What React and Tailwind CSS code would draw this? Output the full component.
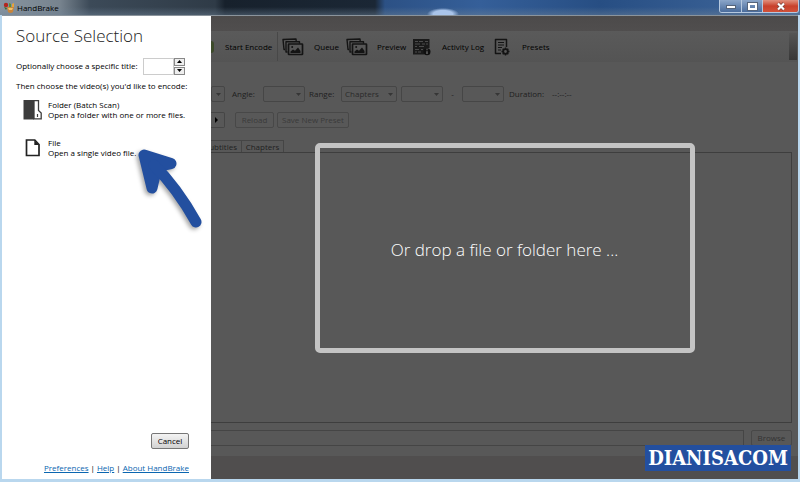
import { useState } from "react";

const toolbar = [
  { label: "Queue", Icon: PicturesIcon, gap: "gap-[10px] w-[64px]" },
  { label: "Preview", Icon: PicturesIcon, gap: "gap-[9px] w-[67px]" },
  { label: "Activity Log", Icon: LogIcon, gap: "gap-[11px] w-[81px]" },
  { label: "Presets", Icon: PresetsIcon, gap: "gap-[12px] w-[60px]" },
];

function AppIcon() {
  return (
    <svg viewBox="0 0 12 12" className="size-3">
      <path d="M4 5h7l-1 5q-2.500 2-5 0z" fill="#c9853a" />
      <path d="M5 6h5l-1 2H6z" fill="#f0c26a" />
      <circle cx="3" cy="3" r="2.200" fill="#b3261e" />
      <path d="M6 1l2 1v3H6z" fill="#5d8f2f" />
      <path d="M9 2l2-1v4H9z" fill="#e8a33a" />
      <path d="M1 5l3 1-1 2z" fill="#3e6b24" />
    </svg>
  );
}

function PicturesIcon() {
  return (
    <svg viewBox="0 0 22 18" className="w-[22px] h-[18px] shrink-0" fill="none" stroke="#141414">
      <path d="M3 11.500H2L1 1.500 14 1l.2 2" strokeWidth="1.400" strokeLinejoin="round" />
      <path d="M5.500 14H4V3.700h13.500v2" strokeWidth="1.400" strokeLinejoin="round" />
      <rect x="6.500" y="6" width="14" height="10.500" rx=".5" strokeWidth="1.700" />
      <path d="M8.500 15v-1.500l2.500-2 2 1.200L16 9.500l2.500 3.500v2z" fill="#141414" stroke="none" />
      <circle cx="10.200" cy="9" r="1" fill="#141414" stroke="none" />
    </svg>
  );
}

function LogIcon() {
  return (
    <svg viewBox="0 0 18 18" className="size-[18px] shrink-0">
      <path d="M0 1h16.500v9h-3L11 13v3.500H0z" fill="#1a1a1a" />
      <path
        d="M2 3.500h3m1 0h4m2 0h3M2 6h5m2 0h3m1 0h2M2 8.500h2m2 0h5M2 11.500h4m2 0h2M2 14h2m1 0h3"
        stroke="#525252"
        strokeWidth=".9"
      />
      <circle cx="14" cy="13.800" r="3.500" fill="#101010" />
      <path d="M14 13.200v2.800M14 11.300v1" stroke="#777" strokeWidth="1.200" />
    </svg>
  );
}

function PresetsIcon() {
  return (
    <svg viewBox="0 0 16 18" className="w-4 h-[18px] shrink-0" fill="none" stroke="#141414">
      <path d="M7 15.500H1.500V1.500h11V9" strokeWidth="1.500" strokeLinejoin="round" />
      <path d="M4 4.500h6M4 7h6M4 9.500h4M4 12h3" strokeWidth="1" />
      <circle cx="11.500" cy="13.500" r="2.300" strokeWidth="1.800" />
      <path
        d="M11.500 9.500v1.500M11.500 16v1.500M7.500 13.500H9M14 13.500h1.500M8.700 10.700l1 1M13.300 15.300l1 1M14.300 10.700l-1 1M9.700 15.300l-1 1"
        strokeWidth="1.400"
      />
    </svg>
  );
}

function FolderIcon() {
  return (
    <svg viewBox="0 0 20 20" className="size-5 shrink-0">
      <path d="M.5 0H11v19.500H.5z" fill="#3c3c3c" />
      <path d="M11 .7h4.500v9.800l2.700 2.500v5.800H11z" fill="#fff" stroke="#3c3c3c" strokeWidth="1.300" />
      <path d="M14.500 14v3" stroke="#3c3c3c" strokeWidth="1.200" />
    </svg>
  );
}

function FileIcon() {
  return (
    <svg viewBox="0 0 20 20" className="size-5 shrink-0" fill="none" stroke="#222">
      <path d="M3.500 2h8.300l4.200 4.500V17.500H3.500z" strokeWidth="1.700" />
      <path d="M11.300 2v5H16z" fill="#222" stroke="none" />
    </svg>
  );
}

function Arrow() {
  return (
    <svg
      viewBox="0 0 72 84"
      className="absolute left-[133px] top-[146px] w-[72px] h-[84px] pointer-events-none drop-shadow-[-2px_2px_2px_rgba(0,0,0,0.35)]"
      fill="none"
      stroke="#234f9f"
      strokeLinecap="round"
      strokeLinejoin="round"
    >
      <path d="M11 9L38 17.500L24 20.500L19 42z" fill="#234f9f" strokeWidth="11" />
      <path d="M21 19Q44 42 63 76" strokeWidth="11" />
    </svg>
  );
}

function Caret() {
  return (
    <svg viewBox="0 0 5 3" className="absolute right-1 top-[7px] w-[5px] h-[3px] pointer-events-none">
      <path d="M0 0h5L2.500 3z" fill="#363636" />
    </svg>
  );
}

function Combo({ label, width, options = [] }) {
  return (
    <span className={`relative ${width}`}>
      <select
        aria-label={label}
        className="appearance-none block w-full h-4 pl-[3px] border border-[#464646] rounded-[2px] text-[8px] leading-3 text-[#2a2a2a]"
      >
        {options.map((o) => (
          <option key={o}>{o}</option>
        ))}
      </select>
      <Caret />
    </span>
  );
}

function Source({ title, text, children }) {
  return (
    <button className="flex items-center gap-[5px] text-left leading-[10px]">
      {children}
      <span>
        <span className="block">{title}</span>
        <span className="block">{text}</span>
      </span>
    </button>
  );
}

export default function App() {
  const [title, setTitle] = useState("");
  const step = (n) => setTitle((t) => String(Math.max(0, Number(t) + n)));

  return (
    <div className="relative min-h-screen flex flex-col bg-[#b9d7ee] font-['Open_Sans','Noto_Sans',sans-serif] text-[8px] text-black">
      <header className="flex justify-between h-[15px] bg-[radial-gradient(ellipse_16px_6px_at_443px_14px,#a9c4ea_60%,transparent_100%),linear-gradient(180deg,transparent_7px,rgba(110,130,150,0.45)_15px),linear-gradient(90deg,#8794a0_0,#77838e_60px,#3c4a58_90px,#2f3b47_215px,#17212c_225px,#1b2735_375px,#2c5185_385px,#355f99_60%,#274e83_75%,#42699d_100%)]">
        <div className="flex items-center gap-[2px] pl-[3px]">
          <AppIcon />
          <span className="text-[8px] leading-3">HandBrake</span>
        </div>
        <div className="flex h-[13px] mr-px border border-t-0 border-[#b6c9df] rounded-b-[3px] overflow-hidden">
          <button aria-label="Minimize" className="w-[22px] bg-linear-to-b from-[#8ba6c9] to-[#4a6c9c] border-r border-[#b6c9df] flex justify-center items-end pb-[3px]">
            <span className="w-[10px] h-1 bg-white border border-[#55647a]" />
          </button>
          <button aria-label="Maximize" className="w-[21px] bg-linear-to-b from-[#8ba6c9] to-[#4a6c9c] border-r border-[#b6c9df] flex justify-center items-center">
            <span className="w-[9px] h-[7px] border-2 border-white outline outline-[#55647a]" />
          </button>
          <button aria-label="Close" className="w-[35px] bg-linear-to-b from-[#e0907e] via-[#c8402b] to-[#d2523a] flex justify-center items-center">
            <svg viewBox="0 0 10 9" className="w-[10px] h-[9px]">
              <path d="M2 1.500l6 6M8 1.500l-6 6" stroke="#6d3a35" strokeWidth="3.400" />
              <path d="M2 1.500l6 6M8 1.500l-6 6" stroke="#fff" strokeWidth="2.200" />
            </svg>
          </button>
        </div>
      </header>

      <div className="flex-1 flex mx-[2px] mb-[3px] border-t border-[#8b949c]">
        <aside className="w-[209px] shrink-0 flex flex-col bg-white pl-[14px] pr-[22px] pt-2 pb-[5px]">
          <h1 className="text-[17px] leading-6 font-light text-[#222]">Source Selection</h1>
          <div className="flex items-center mt-[9px] h-[18px]">
            <label htmlFor="title" className="w-[127px] whitespace-nowrap">
              Optionally choose a specific title:
            </label>
            <input
              id="title"
              value={title}
              onChange={(e) => setTitle(e.target.value)}
              className="w-[31px] h-[17px] px-1 border border-[#ccc]"
            />
            <span className="flex flex-col">
              <button aria-label="Increase" onClick={() => step(1)} className="w-[11px] h-2 border border-[#888] bg-[#eee] flex justify-center items-center">
                <svg viewBox="0 0 5 3" className="w-[5px] h-[3px]"><path d="M0 3h5L2.500 0z" /></svg>
              </button>
              <button aria-label="Decrease" onClick={() => step(-1)} className="w-[11px] h-2 mt-px border border-[#888] bg-[#eee] flex justify-center items-center">
                <svg viewBox="0 0 5 3" className="w-[5px] h-[3px]"><path d="M0 0h5L2.500 3z" /></svg>
              </button>
            </span>
          </div>
          <p className="mt-[5px] leading-3">Then choose the video(s) you'd like to encode:</p>
          <div className="flex flex-col gap-[18px] mt-2 pl-[7px]">
            <Source title="Folder (Batch Scan)" text="Open a folder with one or more files.">
              <FolderIcon />
            </Source>
            <Source title="File" text="Open a single video file.">
              <FileIcon />
            </Source>
          </div>
          <div className="mt-auto flex flex-col items-end">
            <button className="w-[38px] h-4 border border-[#777] rounded-[2px] bg-linear-to-b from-[#f4f4f4] to-[#d2d2d2] leading-3">
              Cancel
            </button>
            <nav className="flex gap-[2px] mt-[13px] leading-3 text-[#0a66b0] whitespace-nowrap">
              <a href="#preferences" className="underline">Preferences</a>
              <span className="text-black">|</span>
              <a href="#help" className="underline">Help</a>
              <span className="text-black">|</span>
              <a href="#about" className="underline">About HandBrake</a>
            </nav>
          </div>
        </aside>

        <main className="relative flex-1 min-w-0 flex flex-col bg-[#585858]">
          <div className="h-[15px] bg-linear-to-b from-[#4c4a4a] to-[#504e4e]" />
          <div className="flex h-[31px] mr-px bg-linear-to-b from-[#5a5a5a] to-[#545454]">
            <span className="w-[3px] h-3 mt-[10px] rounded-r-full bg-[#3c4a2a]" />
            <button className="w-[63px] pl-[11px] text-left whitespace-nowrap">Start Encode</button>
            <div className="flex flex-1 items-center border-l border-[#484848] my-px pl-1">
              {toolbar.map(({ label, Icon, gap }) => (
                <button key={label} className={`flex items-center whitespace-nowrap ${gap}`}>
                  <Icon />
                  {label}
                </button>
              ))}
            </div>
            <span className="w-2 my-[2px] bg-linear-to-b from-[#555] to-[#383838]" />
          </div>

          <div className="flex items-center mt-6 h-4 text-[#1e1e1e]">
            <Combo label="Title" width="w-[14px]" />
            <span className="w-[38px] pl-[7px]">Angle:</span>
            <Combo label="Angle" width="w-[42px]" />
            <span className="w-[36px] pl-1">Range:</span>
            <Combo label="Range" width="w-[56px]" options={["Chapters"]} />
            <Combo label="Start" width="w-[42px] ml-1" />
            <span className="w-[19px] text-center">-</span>
            <Combo label="End" width="w-[42px]" />
            <span className="w-[48px] pl-[5px]">Duration:</span>
            <span>--:--:--</span>
          </div>

          <div className="flex items-center mt-[10px] h-4 text-[#3a3a3a]">
            <button aria-label="Add to queue" className="w-[14px] h-4 pl-1 border border-l-0 border-[#454545] rounded-r-[2px]">
              <svg viewBox="0 0 3 6" className="w-[3px] h-[6px]"><path d="M0 0l3 3-3 3z" /></svg>
            </button>
            <button disabled className="w-[39px] h-4 ml-[10px] border border-[#484848] rounded-[2px] leading-3">Reload</button>
            <button disabled className="w-[72px] h-4 ml-[3px] border border-[#484848] rounded-[2px] leading-3">Save New Preset</button>
          </div>

          <div role="tablist" className="flex mt-3 h-3 leading-[11px] text-[#222]">
            <button role="tab" className="w-[31px] overflow-hidden border-t border-r border-[#454545] flex justify-end pr-1">
              Subtitles
            </button>
            <button role="tab" className="w-[42px] border-t border-r border-[#454545]">Chapters</button>
          </div>
          <div className="flex-1 mr-[6px] border border-l-0 border-[#3e3e3e]" />

          <div className="flex mt-[7px] mr-[6px] h-4">
            <input aria-label="Destination" className="flex-1 min-w-0 h-4 border border-l-0 border-[#454545]" />
            <button disabled className="w-[41px] h-4 ml-[7px] border border-[#484848] rounded-[2px] text-[#333] leading-3">Browse</button>
          </div>
          <footer className="h-[23px] mt-[10px] bg-[#504e4e]" />

          <div className="absolute inset-0 flex items-center justify-center">
            <div className="w-[380px] h-[210px] pt-1 border-[5px] border-[#c4c4c4] rounded-[5px] flex items-center justify-center text-[17px] leading-6 font-light text-white">
              Or drop a file or folder here ...
            </div>
          </div>
        </main>
      </div>

      <Arrow />
      <div className="absolute right-[9px] bottom-[11px] w-[146px] h-[26px] bg-[#234f9f] text-white text-center font-bold text-[20px] leading-[26px] font-['DejaVu_Serif_Condensed','DejaVu_Serif',serif]">
        DIANISACOM
      </div>
    </div>
  );
}
